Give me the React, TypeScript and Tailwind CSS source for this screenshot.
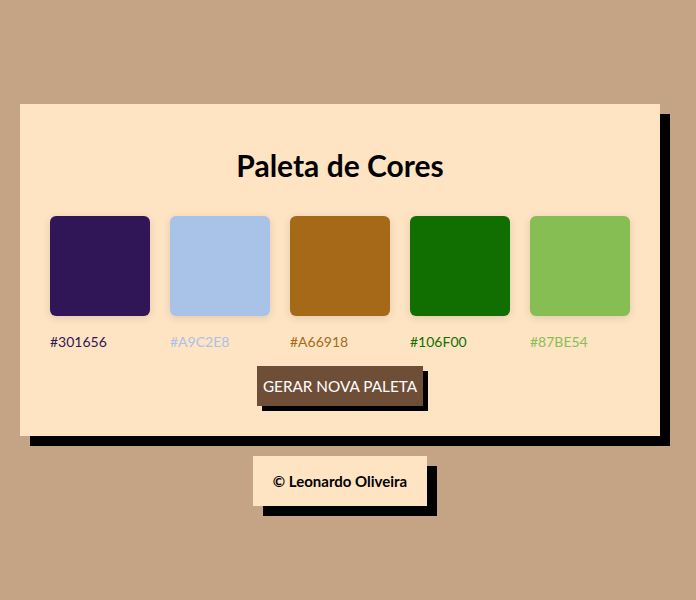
import React from 'react'

const colors = ["#301656", "#A9C2E8", "#A66918", "#106F00", "#87BE54"];

export default function App() {
    return (
        <div className="min-h-[600px] bg-[#C4A484] flex flex-col items-center pt-[104px] pr-4 font-['Lato',sans-serif]">
            <main className="w-[640px] h-[332px] bg-[#FFE4C4] shadow-[10px_10px_0_#000] flex flex-col items-center pt-[43px]">
                <h1 className="text-[30px] leading-[36px] font-bold text-black">Paleta de Cores</h1>
                <div className="flex gap-5 mt-[33px]">
                    {colors.map((c) => (
                        <div key={c} className="flex flex-col w-[100px]">
                            <div className="w-[100px] h-[100px] rounded-md shadow-[0_2px_8px_rgba(0,0,0,0.12)]" style={{ backgroundColor: c }} />
                            <span className="mt-[17px] text-[14px] leading-[18px]" style={{ color: c }}>{c}</span>
                        </div>
                    ))}
                </div>
                <button className="mt-[15px] h-[40px] w-[166px] bg-[#6F4E37] text-white text-[15.3px] shadow-[5px_5px_0_#000]">GERAR NOVA PALETA</button>
            </main>
            <footer className="mt-5 w-[174px] h-[50px] bg-[#FFE4C4] shadow-[10px_10px_0_#000] flex items-center justify-center">
                <p className="text-[15px] font-bold text-black">© Leonardo Oliveira</p>
            </footer>
        </div>
    )
}
